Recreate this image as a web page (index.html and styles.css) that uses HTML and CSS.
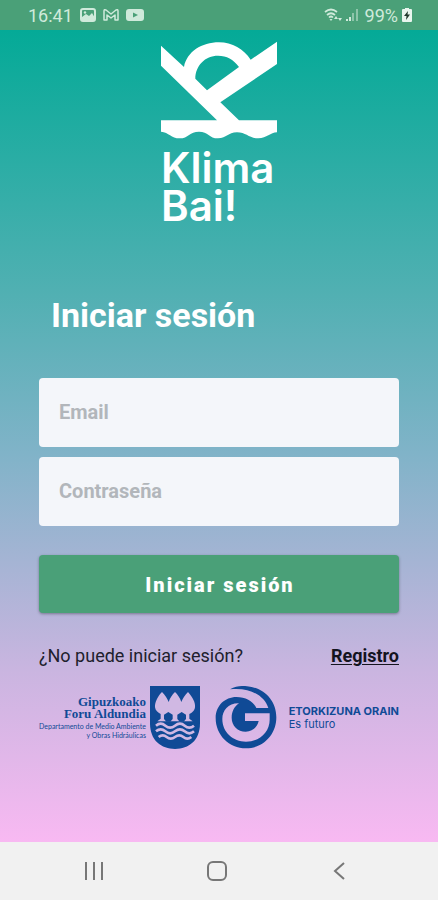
FILE: index.html
```html
<!DOCTYPE html>
<html lang="es">
<head>
<meta charset="utf-8">
<meta name="viewport" content="width=device-width, initial-scale=1">
<title>Klima Bai!</title>
<link rel="stylesheet" href="styles.css">
</head>
<body>
<header class="status">
  <div class="status-group">
    <span class="clock">16:41</span>
    <svg class="ico-image" viewBox="0 0 16 14" aria-hidden="true"><rect x="1" y="1" width="14" height="12" rx="2" fill="none" stroke="currentColor" stroke-width="2"/><path d="M2 12V9l4-3 3 2 3-3 3 5v2z" fill="currentColor"/><circle cx="5" cy="4.500" r="1.200" fill="currentColor"/></svg>
    <svg class="ico-mail" viewBox="0 0 16 14" aria-hidden="true"><path d="M1 12V3q0-2 2-1l5 4 5-4q2-1 2 1v9h-3V7l-4 3-4-3v5z" fill="none" stroke="currentColor" stroke-width="1.500" stroke-linejoin="round"/></svg>
    <svg class="ico-video" viewBox="0 0 18 14" aria-hidden="true"><path fill-rule="evenodd" d="M3 1h12q3 0 3 3v6q0 3-3 3H3q-3 0-3-3V4q0-3 3-3zm4 3.500v5L12 7z" fill="currentColor"/></svg>
  </div>
  <div class="status-group status-right">
    <svg class="ico-wifi" viewBox="0 0 18 14" aria-hidden="true"><g fill="none" stroke="currentColor" stroke-width="1.700"><path d="M1 4q6-5 12 0M3 7q4-3.500 8 0M5 9.500q2-2 4 0"/></g><path d="M5.500 11l1.500 2 1.500-2zM10 11l2-3 2 3zM14 10h4l-2 3z" fill="currentColor"/></svg>
    <svg class="ico-signal" viewBox="0 0 12 14" aria-hidden="true"><path d="M0 11h2v2H0zM3 9h2v4H3z" fill="currentColor"/><path d="M6 5h2v8H6zM10 1h2v12h-2z" fill="currentColor" opacity=".5"/></svg>
    <span class="percent">99%</span>
    <svg class="ico-battery" viewBox="0 0 10 14" aria-hidden="true"><path d="M3 0h4v1h2q1 0 1 1v11q0 1-1 1H1q-1 0-1-1V2q0-1 1-1h2z" fill="#e9f5ee"/><path d="M6 3L2 8h2.500L4 12l4-5.500H5.500z" fill="#20382c"/></svg>
  </div>
</header>

<main class="screen">
  <div class="brand">
    <svg class="brand-mark" viewBox="34 34 348 294" aria-hidden="true"><path fill="#fff" fill-rule="evenodd" d="M34 48L103 112C112 66 156 38 208 38C248 38 282 58 303 90L382 36V103L212 218L268 272H382V308C362 308 352 326 326 326C297 326 290 308 262 308C234 308 232 326 205 326C178 326 176 306 148 306C120 306 116 326 90 326C64 326 58 308 34 306V272H202L34 108ZM137 147L172 182L268 112C250 88 232 78 205 78C166 78 137 108 137 147Z"/></svg>
    <p class="brand-name">Klima<br>Bai!</p>
  </div>

  <h1 class="title">Iniciar sesión</h1>

  <form class="login">
    <input class="field" type="email" placeholder="Email" aria-label="Email">
    <input class="field" type="password" placeholder="Contraseña" aria-label="Contraseña">
    <button class="submit" type="button">Iniciar sesión</button>
  </form>

  <div class="help">
    <span>¿No puede iniciar sesión?</span>
    <a class="register" href="#">Registro</a>
  </div>

  <footer class="sponsors">
    <div class="sponsor">
      <p class="council"><strong>Gipuzkoako<br>Foru Aldundia</strong><small>Departamento de Medio Ambiente<br>y Obras Hidráulicas</small></p>
      <svg class="shield" viewBox="0 0 150 189" aria-hidden="true"><path d="M0 0H150V112C150 164 116 189 75 189S0 164 0 112Z" fill="#104a96"/><path fill="#d0b8e3" d="M36 18C46 28 52 38 56 48C60 36 67 26 75 18C83 26 90 36 94 48C98 38 104 28 114 18C128 34 137 50 135 64C133 76 126 80 118 84V98L128 106H22L32 98V84C24 80 16 74 15 64C14 48 24 30 36 18Z"/><path fill="#104a96" d="M55 78L68 86V99L61 107H49L42 99V86ZM95 78L108 86V99L101 107H89L82 99V86Z"/><g fill="none" stroke="#d0b8e3" stroke-width="8"><path d="M18 119q14-12 28 0t29 0t29 0t28 0M18 136q14-12 28 0t29 0t29 0t28 0M26 153q12-10 24 0t25 0t25 0t24 0"/></g></svg>
    </div>
    <div class="sponsor sponsor-future">
      <svg class="g-mark" viewBox="8 11 186 189" aria-hidden="true"><path fill="#104a96" fill-rule="evenodd" d="M53 21C72 10 90 10 104 12C155 16 192 55 192 105C192 158 152 198 101 198C50 198 10 158 10 107C10 70 38 44 72 44C100 44 122 56 132 77H168C158 45 120 14 53 21ZM80 63C48 62 30 84 30 110C30 150 62 178 101 178C140 178 172 150 172 112V93H98V116H139C134 136 120 148 100 148C76 148 58 130 58 106C58 88 66 72 80 63Z"/></svg>
      <p class="future"><strong>ETORKIZUNA ORAIN</strong><span>Es futuro</span></p>
    </div>
  </footer>
</main>

<nav class="system-nav" aria-label="Sistema">
  <button type="button" aria-label="Recientes"><svg viewBox="0 0 20 20" aria-hidden="true"><path d="M2 1v18M10 1v18M18 1v18"/></svg></button>
  <button type="button" aria-label="Inicio"><svg viewBox="0 0 20 20" aria-hidden="true"><rect x="1" y="1" width="18" height="18" rx="5"/></svg></button>
  <button type="button" aria-label="Atrás"><svg viewBox="0 0 20 20" aria-hidden="true"><path d="M15 2L6 10l9 8"/></svg></button>
</nav>
</body>
</html>
```
FILE: styles.css
```css
* { box-sizing: border-box; }

body {
  margin: 0;
  min-height: 100vh;
  display: flex;
  flex-direction: column;
  font-family: Roboto, sans-serif;
  color: #20202c;
}

p, h1 { margin: 0; }
svg { display: block; flex: none; }

.status {
  height: 30px;
  padding: 0 26px 0 28px;
  display: flex;
  justify-content: space-between;
  align-items: center;
  background: #4aa078;
  color: #cfeadb;
  font-size: 18px;
}
.status-group { display: flex; align-items: center; gap: 7px; }
.status-right { gap: 4px; }
.ico-image, .ico-mail { width: 16px; height: 14px; }
.ico-video, .ico-wifi { width: 18px; height: 14px; }
.ico-signal { width: 12px; height: 14px; margin-right: 3px; }
.ico-battery { width: 10px; height: 14px; }

.screen {
  flex: 1;
  padding: 11px 39px 24px;
  background: linear-gradient(#04aa97, #50b0b2 32%, #80b3c8 52%, #cab5e0 79%, #f8b9f2);
}

.brand { width: 116px; margin: 0 auto; }
.brand-mark { width: 116px; height: 98px; }
.brand-name {
  margin-top: 10px;
  font: 600 42px/38px Inter, sans-serif;
  color: #fff;
}

.title {
  margin: 70px 12px 0;
  font-size: 34px;
  line-height: 40px;
  color: #fff;
}

.login { display: flex; flex-direction: column; gap: 10px; margin-top: 43px; }
.field {
  width: 100%;
  height: 69px;
  padding: 0 20px 2px;
  border: 0;
  border-radius: 4px;
  background: #f4f6fa;
  font: 700 20px/24px Roboto, sans-serif;
  color: #333;
}
.field::placeholder { color: #b2b6bb; opacity: 1; }
.submit {
  height: 58px;
  margin-top: 19px;
  padding: 2px 0 0 2px;
  border: 0;
  border-radius: 4px;
  background: #4aa078;
  box-shadow: 0 1px 3px rgba(0, 0, 0, .35);
  color: #fff;
  font: 900 20px/26px Roboto, sans-serif;
  letter-spacing: 2px;
}

.help {
  display: flex;
  justify-content: space-between;
  margin-top: 32px;
  font-size: 18px;
  line-height: 22px;
}
.register { color: #14141e; font-weight: 700; text-underline-offset: 2px; }

.sponsors {
  display: flex;
  justify-content: space-between;
  margin-top: 19px;
  color: #104a96;
}
.sponsor { display: flex; align-items: center; gap: 4px; }
.sponsor-future { gap: 12px; }
.council { text-align: right; }
.council strong { display: block; font: 700 13px/12px "Liberation Serif", serif; }
.council small { display: block; margin-top: 2px; font: 400 7px/9px Lato, sans-serif; white-space: nowrap; }
.shield { width: 50px; height: 63px; }
.g-mark { width: 62px; height: 63px; }
.future { font: 400 11px/13px Inter, sans-serif; white-space: nowrap; }
.future strong, .future span { display: block; }

.system-nav {
  height: 58px;
  padding: 0 38px 0 33px;
  display: flex;
  justify-content: space-between;
  align-items: center;
  background: #f1f1f1;
}
.system-nav button {
  width: 122px;
  height: 44px;
  display: flex;
  align-items: center;
  justify-content: center;
  border: 0;
  background: none;
}
.system-nav svg { width: 20px; height: 20px; fill: none; stroke: #777; stroke-width: 2; }
```
